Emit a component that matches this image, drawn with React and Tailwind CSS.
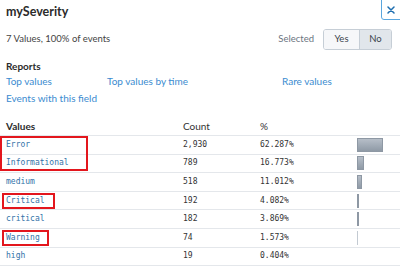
import React from "react";

const rows = [
  { v: "Error", c: "2,930", p: "62.287%", n: 62.287 },
  { v: "Informational", c: "789", p: "16.773%", n: 16.773 },
  { v: "medium", c: "518", p: "11.012%", n: 11.012 },
  { v: "Critical", c: "192", p: "4.082%", n: 4.082 },
  { v: "critical", c: "182", p: "3.869%", n: 3.869 },
  { v: "Warning", c: "74", p: "1.573%", n: 1.573 },
  { v: "high", c: "19", p: "0.404%", n: 0.404 },
];

const sans = { fontFamily: "Lato, 'Open Sans', sans-serif" };

export default function App() {
  return (
    <div
      className="relative w-[400px] h-[270px] overflow-hidden bg-white text-[#333]"
      style={sans}
    >
      <div className="h-[24px] pt-[5px] pl-[6px] text-[12.5px] font-bold leading-[14px] text-[#2b2b2b]">
        mySeverity
      </div>
      <div className="mt-[5px] flex h-[21px] items-center justify-between pl-[6px] pr-[8px]">
        <span className="text-[9.5px] text-[#444]">7 Values, 100% of events</span>
        <div className="flex items-center gap-[9px]">
          <span className="text-[9.5px] text-[#6b7480]">Selected</span>
          <div className="flex h-[21px] overflow-hidden rounded-[3px] border border-[#c6ced6] text-[9.5px] text-[#3c444d]">
            <div className="flex w-[35px] items-center justify-center bg-[#f6f7f9]">Yes</div>
            <div className="flex w-[32px] items-center justify-center border-l border-[#c6ced6] bg-[#e1e6eb]">No</div>
          </div>
        </div>
      </div>
      <div className="mt-[10px] pl-[6px] text-[10px] font-bold leading-[12px] text-[#2b2b2b]">Reports</div>
      <div className="mt-[3px] flex pl-[6px] text-[10px] leading-[12px] text-[#3a8bd0]">
        <span className="w-[101px]">Top values</span>
        <span className="w-[175px]">Top values by time</span>
        <span>Rare values</span>
      </div>
      <div className="mt-[5px] pl-[6px] text-[10px] leading-[12px] text-[#3a8bd0]">Events with this field</div>

      <div className="mt-[13px]">
        <div className="grid h-[19px] grid-cols-[183px_77px_97px_43px] items-center border-b border-[#e4e7eb] text-[10px]">
          <span className="pl-[6px] font-bold text-[#2b2b2b]">Values</span>
          <span className="text-[#333]">Count</span>
          <span className="text-[#333]">%</span>
          <span />
        </div>
        {rows.map((r) => {
          const w = r.n * 0.42;
          return (
            <div
              key={r.v}
              className="grid h-[18.6px] grid-cols-[183px_77px_97px_43px] items-center border-b border-[#e4e7eb] text-[8px]"
              style={{ fontFamily: "'DejaVu Sans Mono', monospace" }}
            >
              <span className="pl-[6px] text-[#3272a8]">{r.v}</span>
              <span className="text-[#333]">{r.c}</span>
              <span className="text-[#333]">{r.p}</span>
              <div className="flex items-center">
                {w >= 0.5 && (
                  <div
                    className={
                      w < 1
                        ? "h-[14px] bg-[#c3cad2]"
                        : "h-[14px] border border-[#8e98a4] bg-gradient-to-b from-[#b6bec8] to-[#8f9aa6]"
                    }
                    style={{ width: Math.max(1, Math.round(w)) + "px" }}
                  />
                )}
              </div>
            </div>
          );
        })}
      </div>

      <div className="absolute right-[-3px] top-[-4px] flex h-[24px] w-[22px] items-center justify-center rounded-[3px] border border-[#5aa6de] pt-[3px] pr-[3px]">
        <svg width="8" height="8" viewBox="0 0 8 8">
          <path d="M1 1L7 7M7 1L1 7" stroke="#1f6fb0" strokeWidth="1.5" strokeLinecap="round" />
        </svg>
      </div>

      <div className="absolute left-0 top-[136px] h-[35px] w-[88px] border-2 border-[#e3161d]" />
      <div className="absolute left-[2px] top-[193px] h-[16px] w-[53px] border-2 border-[#e3161d]" />
      <div className="absolute left-[2px] top-[230px] h-[16px] w-[47px] border-2 border-[#e3161d]" />
    </div>
  );
}
